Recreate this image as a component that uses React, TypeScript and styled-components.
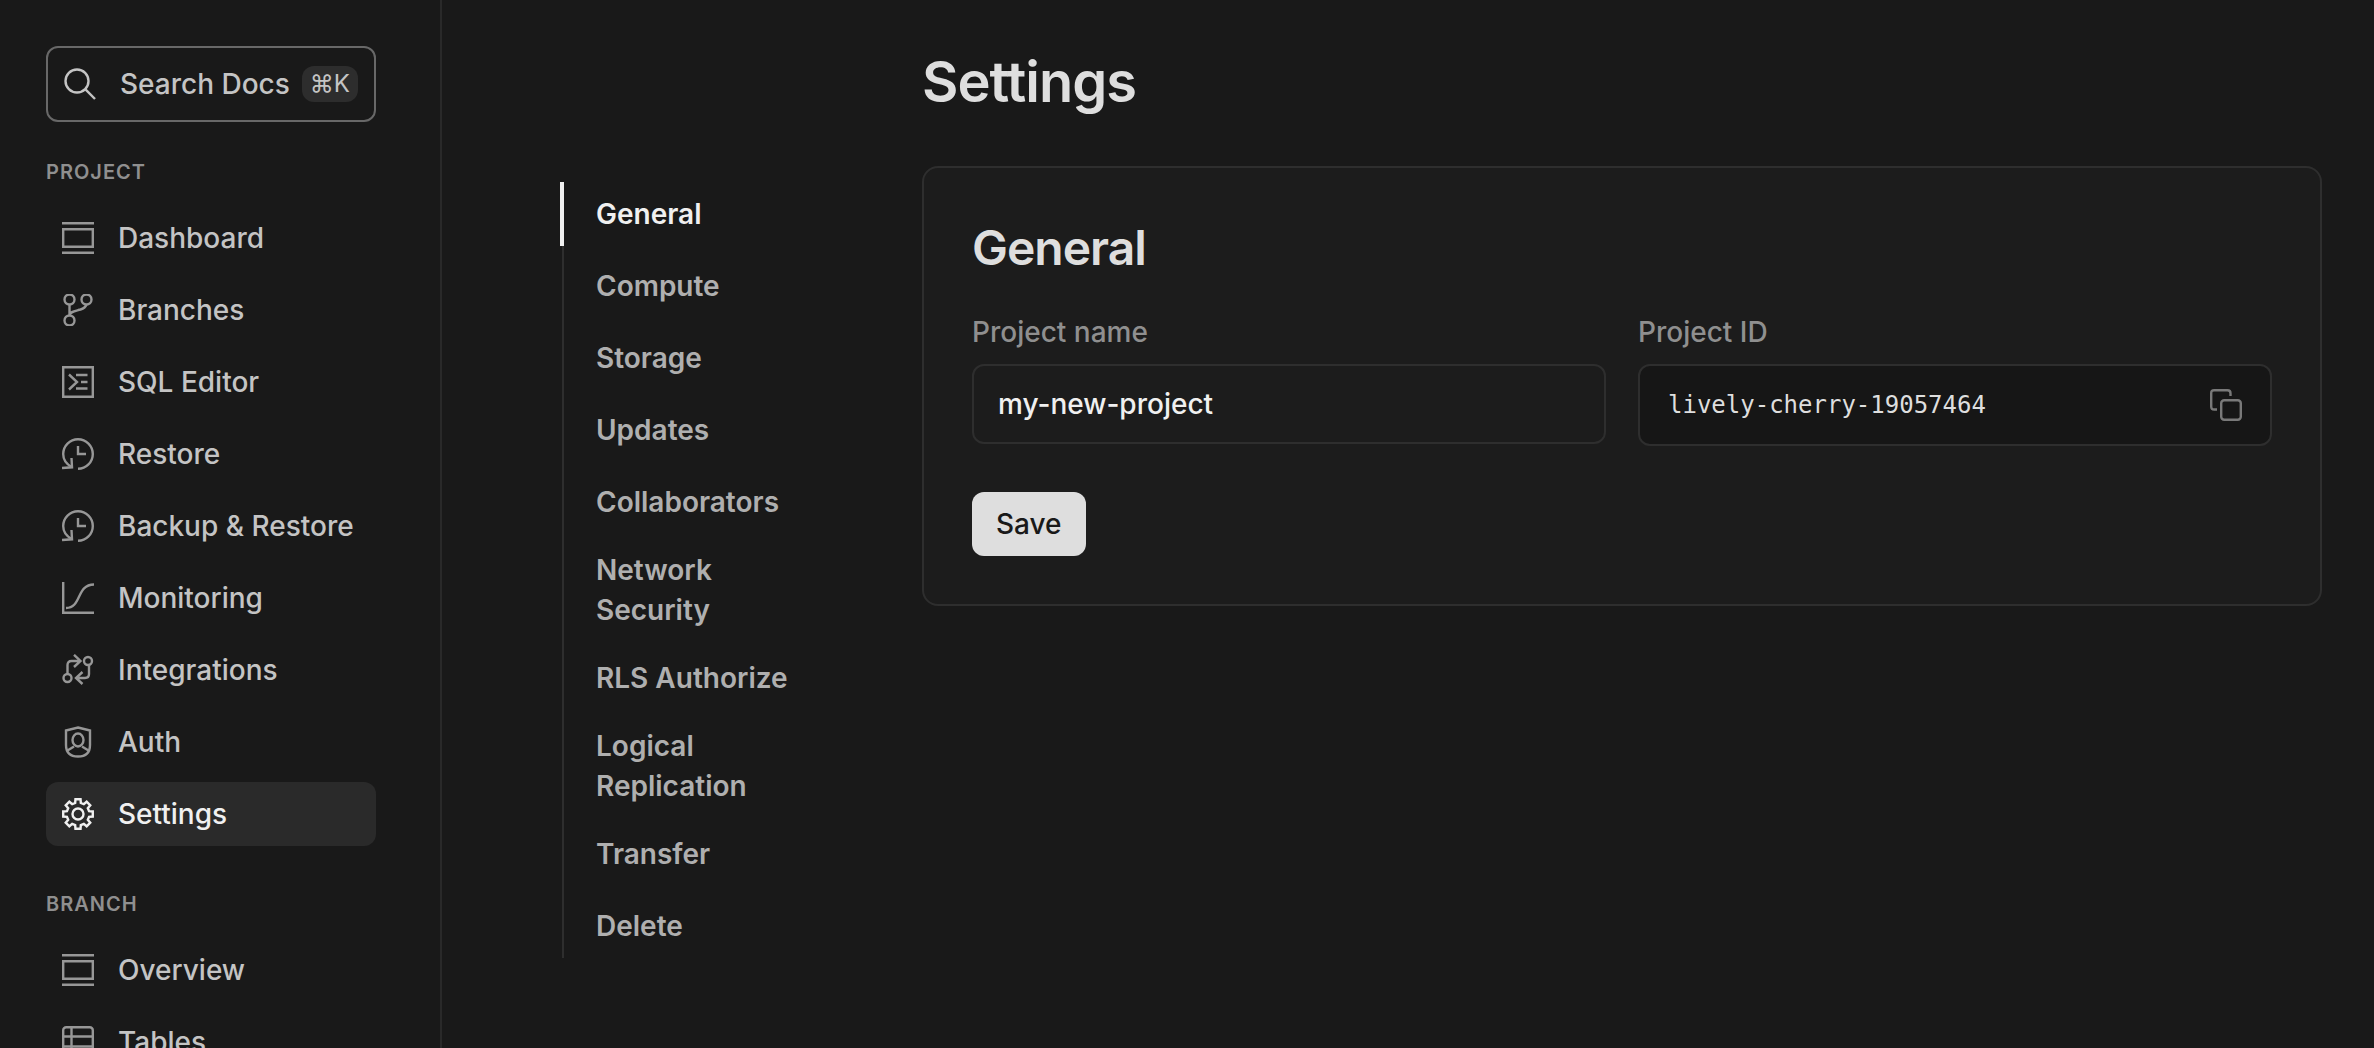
import React from "react";
import styled, { createGlobalStyle } from "styled-components";

const Global = createGlobalStyle`
  *, *::before, *::after { box-sizing: border-box; }
  html, body { margin: 0; background: #191919; }
  body, button, input {
    font-family: Inter, "Liberation Sans", sans-serif;
    font-size: 28px;
    line-height: 40px;
  }
`;

const Page = styled.div`
  display: flex;
  height: 100vh;
  overflow: hidden;
  background: #191919;
  color: #c4c4c4;
`;

const Sidebar = styled.aside`
  flex: 0 0 442px;
  padding: 46px 64px 0 46px;
  border-right: 2px solid #292929;
  overflow: hidden;
`;

const SearchButton = styled.button`
  display: flex;
  align-items: center;
  width: 100%;
  height: 76px;
  padding: 0 16px;
  border: 2px solid #686868;
  border-radius: 12px;
  background: transparent;
  color: #c4c4c4;
  font-weight: 500;
  cursor: pointer;
`;

const SearchLabel = styled.span`
  flex: 1;
  margin-left: 24px;
  text-align: left;
  white-space: nowrap;
`;

const Shortcut = styled.kbd`
  display: flex;
  align-items: center;
  height: 36px;
  padding: 0 8px;
  border-radius: 12px;
  background: #2d2d2d;
  font-family: Inter, "DejaVu Sans", sans-serif;
  font-size: 24px;
  line-height: 32px;
  font-weight: 400;
`;

const MenuSection = styled.nav`
  padding: 36px 0 8px;
`;

const SectionTitle = styled.h2`
  margin: 0 0 20px;
  color: #8f8f8f;
  font-size: 20px;
  line-height: 28px;
  font-weight: 600;
  letter-spacing: 1px;
  text-transform: uppercase;
`;

const MenuList = styled.ul`
  display: flex;
  flex-direction: column;
  gap: 8px;
  margin: 0;
  padding: 0;
  list-style: none;
`;

const MenuLink = styled.a<{ $active?: boolean }>`
  display: flex;
  align-items: center;
  gap: 24px;
  height: 64px;
  padding: 0 16px;
  border-radius: 12px;
  background: ${(p) => (p.$active ? "#2a2a2a" : "transparent")};
  color: ${(p) => (p.$active ? "#f0f0f0" : "#c4c4c4")};
  font-weight: 500;
  text-decoration: none;
  white-space: nowrap;

  svg { color: ${(p) => (p.$active ? "#f0f0f0" : "#979797")}; }
`;

const Glyph = styled.svg`
  flex: none;
  display: block;
  width: 32px;
  height: 32px;
  fill: none;
  stroke: currentColor;
  stroke-width: 2.4;
`;

const Main = styled.main`
  flex: 1;
  display: flex;
  gap: 120px;
  min-width: 0;
  padding: 0 52px 0 120px;
`;

const SubNav = styled.nav`
  flex: 0 0 240px;
  align-self: flex-start;
  margin-top: 182px;
  border-left: 2px solid #2e2e2e;
`;

const SubLink = styled.a<{ $active?: boolean }>`
  display: flex;
  align-items: center;
  min-height: 64px;
  margin-left: ${(p) => (p.$active ? "-4px" : "0")};
  padding: 8px 0 8px 32px;
  border-left: ${(p) => (p.$active ? "4px solid #f0f0f0" : "0")};
  color: ${(p) => (p.$active ? "#f0f0f0" : "#afafaf")};
  font-weight: 600;
  text-decoration: none;
`;

const Content = styled.section`
  flex: 1;
  min-width: 0;
`;

const Title = styled.h1`
  margin: 46px 0 48px;
  color: #dedede;
  font-size: 56px;
  line-height: 72px;
  font-weight: 600;
  letter-spacing: -1px;
`;

const Card = styled.form`
  padding: 48px;
  border: 2px solid #2e2e2e;
  border-radius: 16px;
  background: #1c1c1c;
`;

const CardTitle = styled.h2`
  margin: 0 0 32px;
  color: #dedede;
  font-size: 48px;
  line-height: 64px;
  font-weight: 600;
  letter-spacing: -1px;
`;

const Fields = styled.div`
  display: grid;
  grid-template-columns: 1fr 1fr;
  align-items: start;
  gap: 32px;
`;

const Field = styled.div`
  display: flex;
  flex-direction: column;
  gap: 12px;
  min-width: 0;
`;

const Label = styled.label`
  color: #8f8f8f;
  font-weight: 500;
`;

const TextInput = styled.input`
  width: 100%;
  height: 80px;
  padding: 0 24px;
  border: 2px solid #2e2e2e;
  border-radius: 12px;
  background: #1c1c1c;
  color: #f0f0f0;
  font-weight: 500;
  outline: none;
`;

const CopyField = styled.div`
  display: flex;
  align-items: center;
  height: 82px;
  padding: 0 28px;
  border: 2px solid #2e2e2e;
  border-radius: 12px;
  background: #161616;
`;

const CodeInput = styled.input`
  flex: 1;
  min-width: 0;
  padding: 0;
  border: 0;
  background: transparent;
  color: #dedede;
  font-family: "DejaVu Sans Mono", monospace;
  font-size: 24px;
  outline: none;
`;

const CopyButton = styled.button`
  padding: 0;
  border: 0;
  background: transparent;
  color: #797979;
  cursor: pointer;
`;

const SaveButton = styled.button`
  height: 64px;
  margin-top: 46px;
  padding: 0 24px;
  border: 0;
  border-radius: 12px;
  background: #dedede;
  color: #191919;
  font-weight: 500;
  cursor: pointer;
`;

const SearchIcon = () => (
  <Glyph viewBox="0 0 32 32">
    <circle cx="13" cy="13" r="11.5" />
    <path d="M21.2 21.2 31 31" />
  </Glyph>
);

const WindowIcon = () => (
  <Glyph viewBox="0 0 32 32">
    <path d="M0 1.2h32M0 30.8h32M1.2 7.2h29.6v17.6H1.2z" />
  </Glyph>
);

const BranchIcon = () => (
  <Glyph viewBox="0 0 32 32">
    <circle cx="7.5" cy="5.5" r="5" />
    <circle cx="24.5" cy="5.5" r="5" />
    <circle cx="7.5" cy="26.5" r="5" />
    <path d="M7.5 10.5v11M24.5 10.5c-1 3-3 4-6 5-5 1.5-11 2-11 6" />
  </Glyph>
);

const TerminalIcon = () => (
  <Glyph viewBox="0 0 32 32">
    <path d="M1.2 1.2h29.6v29.6H1.2zM7 8.5l8 7.5-8 7.5M14 9h11.5M19 16h6.5M14 22.5h11.5" />
  </Glyph>
);

const RestoreIcon = () => (
  <Glyph viewBox="0 0 32 32">
    <path d="M16 30.8A14.8 14.8 0 1 0 1.200 16c0 5.500 3 10 8.500 13" />
    <path d="M0 30l10-.7-.5-9.300M16 8v8h8" />
  </Glyph>
);

const ChartIcon = () => (
  <Glyph viewBox="0 0 32 32">
    <path d="M1.2 0v30.8H32M4 26c16 0 10-23.5 28-23.5" />
  </Glyph>
);

const IntegrationsIcon = () => (
  <Glyph viewBox="0 0 32 32">
    <circle cx="26" cy="7" r="4" />
    <circle cx="5.5" cy="24" r="4" />
    <path d="M5.500 20v-9q0-4 4-4h8M12 .8 18.500 7 12 13M27 11v9q0 4-4 4h-8M20.500 18 14 24l6.500 6" />
  </Glyph>
);

const AuthIcon = () => (
  <Glyph viewBox="0 0 32 32">
    <path d="M16 1.500 28 4.500V19q0 11.500-12 11.500T4 19V4.500z" />
    <ellipse cx="16" cy="14" rx="5.5" ry="6.5" />
    <path d="M5.500 24.500 12 20.500M26.500 24.500 20 20.500" />
  </Glyph>
);

const gearPath = (() => {
  const points: string[] = [];
  for (let i = 0; i < 8; i += 1) {
    const mid = (i * Math.PI) / 4;
    const corners: [number, number][] = [
      [-0.25, 11.4],
      [-0.17, 15.0],
      [0.17, 15.0],
      [0.25, 11.4],
    ];
    corners.forEach(([turn, radius]) => {
      const x = 16 + radius * Math.sin(mid + turn);
      const y = 16 - radius * Math.cos(mid + turn);
      points.push(`${x.toFixed(2)} ${y.toFixed(2)}`);
    });
  }
  return `M${points.join("L")}Z`;
})();

const GearIcon = () => (
  <Glyph viewBox="0 0 32 32">
    <path d={gearPath} />
    <circle cx="16" cy="16" r="5.5" />
  </Glyph>
);

const TableIcon = () => (
  <Glyph viewBox="0 0 32 32">
    <rect x="1.2" y="1.2" width="29.6" height="29.6" rx="3" />
    <path d="M1 10.5h30M1 20.5h30M9.500 1v30" />
  </Glyph>
);

const CopyIcon = () => (
  <Glyph viewBox="0 0 32 32">
    <rect x="11.2" y="11.2" width="19.6" height="19.6" rx="3" />
    <path d="M7 20.500H4.200q-3 0-3-3V4.200q0-3 3-3h13.300q3 0 3 3V7" />
  </Glyph>
);

type Item = { label: string; Icon: React.ComponentType; active?: boolean };

const projectItems: Item[] = [
  { label: "Dashboard", Icon: WindowIcon },
  { label: "Branches", Icon: BranchIcon },
  { label: "SQL Editor", Icon: TerminalIcon },
  { label: "Restore", Icon: RestoreIcon },
  { label: "Backup & Restore", Icon: RestoreIcon },
  { label: "Monitoring", Icon: ChartIcon },
  { label: "Integrations", Icon: IntegrationsIcon },
  { label: "Auth", Icon: AuthIcon },
  { label: "Settings", Icon: GearIcon, active: true },
];

const branchItems: Item[] = [
  { label: "Overview", Icon: WindowIcon },
  { label: "Tables", Icon: TableIcon },
];

const sections = [
  "General",
  "Compute",
  "Storage",
  "Updates",
  "Collaborators",
  "Network Security",
  "RLS Authorize",
  "Logical Replication",
  "Transfer",
  "Delete",
];

const Menu = ({ title, items }: { title: string; items: Item[] }) => (
  <MenuSection aria-label={title}>
    <SectionTitle>{title}</SectionTitle>
    <MenuList>
      {items.map(({ label, Icon, active }) => (
        <li key={label}>
          <MenuLink href="#" $active={active}>
            <Icon />
            {label}
          </MenuLink>
        </li>
      ))}
    </MenuList>
  </MenuSection>
);

export default function App() {
  return (
    <Page>
      <Global />
      <Sidebar>
        <SearchButton type="button">
          <SearchIcon />
          <SearchLabel>Search Docs</SearchLabel>
          <Shortcut>⌘K</Shortcut>
        </SearchButton>
        <Menu title="Project" items={projectItems} />
        <Menu title="Branch" items={branchItems} />
      </Sidebar>
      <Main>
        <SubNav aria-label="Settings sections">
          <MenuList>
            {sections.map((name, index) => (
              <li key={name}>
                <SubLink href="#" $active={index === 0}>
                  {name}
                </SubLink>
              </li>
            ))}
          </MenuList>
        </SubNav>
        <Content>
          <Title>Settings</Title>
          <Card onSubmit={(event) => event.preventDefault()}>
            <CardTitle>General</CardTitle>
            <Fields>
              <Field>
                <Label htmlFor="project-name">Project name</Label>
                <TextInput id="project-name" defaultValue="my-new-project" />
              </Field>
              <Field>
                <Label htmlFor="project-id">Project ID</Label>
                <CopyField>
                  <CodeInput id="project-id" readOnly value="lively-cherry-19057464" />
                  <CopyButton type="button" aria-label="Copy project ID">
                    <CopyIcon />
                  </CopyButton>
                </CopyField>
              </Field>
            </Fields>
            <SaveButton type="submit">Save</SaveButton>
          </Card>
        </Content>
      </Main>
    </Page>
  );
}
